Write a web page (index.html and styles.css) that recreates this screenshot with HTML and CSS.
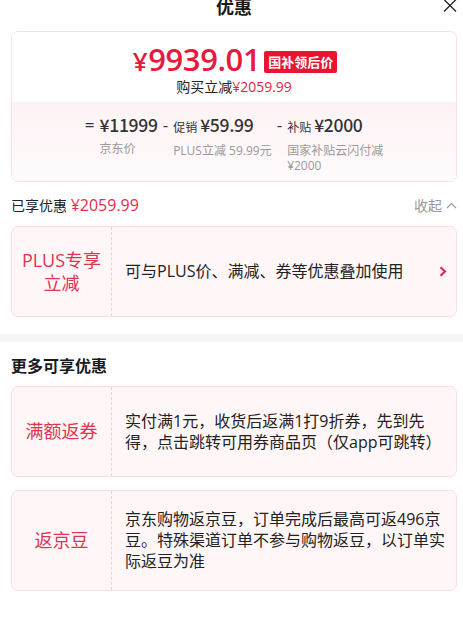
FILE: index.html
```html
<!DOCTYPE html>
<html lang="zh-CN">
<head>
<meta charset="utf-8">
<title>优惠</title>
<link rel="stylesheet" href="styles.css">
</head>
<body>
<div class="page">
  <header class="header">
    <h1 class="title">优惠</h1>
    <button class="close" aria-label="关闭">
      <svg width="14" height="13" viewBox="0 0 14 13"><path d="M1 0.5 L13 12.5 M13 0.5 L1 12.5" stroke="#222" stroke-width="1.3" fill="none"/></svg>
    </button>
  </header>

  <div class="wrap">
    <section class="summary">
      <div class="summary-top">
        <div class="price-row">
          <span class="price"><span class="yen">¥</span>9939.01</span>
          <span class="badge">国补领后价</span>
        </div>
        <div class="save">购买立减<span class="red">¥2059.99</span></div>
      </div>
      <div class="summary-bottom">
        <div class="calc">
          <div class="calc-item">
            <span class="op">=</span>
            <div class="calc-body">
              <div class="val">¥11999</div>
              <div class="lbl">京东价</div>
            </div>
          </div>
          <div class="calc-item">
            <span class="op">-</span>
            <div class="calc-body">
              <div class="val"><span class="tag">促销</span>¥59.99</div>
              <div class="lbl">PLUS立减 59.99元</div>
            </div>
          </div>
          <div class="calc-item">
            <span class="op">-</span>
            <div class="calc-body">
              <div class="val"><span class="tag">补贴</span>¥2000</div>
              <div class="lbl">国家补贴云闪付减¥2000</div>
            </div>
          </div>
        </div>
      </div>
    </section>

    <div class="enjoyed">
      <div class="enjoyed-text">已享优惠 <span class="red">¥2059.99</span></div>
      <div class="collapse">收起
        <svg width="11" height="7" viewBox="0 0 11 7"><path d="M1 6 L5.5 1.5 L10 6" stroke="#999" stroke-width="1.2" fill="none"/></svg>
      </div>
    </div>

    <div class="promo">
      <div class="promo-name">PLUS专享<br>立减</div>
      <div class="promo-desc">可与PLUS价、满减、券等优惠叠加使用</div>
      <svg class="promo-arrow" width="8" height="11" viewBox="0 0 8 11"><path d="M1.5 1.2 L6 5.5 L1.5 9.8" stroke="#e1284a" stroke-width="2.2" fill="none"/></svg>
    </div>
  </div>

  <div class="band"></div>

  <div class="wrap">
    <h2 class="section-title">更多可享优惠</h2>
    <div class="promo">
      <div class="promo-name">满额返券</div>
      <div class="promo-desc">实付满1元，收货后返满1打9折券，先到先得，点击跳转可用券商品页（仅app可跳转）</div>
    </div>
    <div class="promo">
      <div class="promo-name">返京豆</div>
      <div class="promo-desc">京东购物返京豆，订单完成后最高可返496京豆。特殊渠道订单不参与购物返豆，以订单实际返豆为准</div>
    </div>
  </div>
</div>
</body>
</html>
```

FILE: styles.css
```css
* { box-sizing: border-box; }
html, body { margin: 0; padding: 0; background: #fff; }
body {
  font-family: "Open Sans", "Noto Sans CJK SC", sans-serif;
  color: #222;
  width: 463px;
  overflow: hidden;
}
.page { width: 463px; }

.header {
  height: 31px;
  display: grid;
  grid-template-columns: 1fr auto 1fr;
  align-items: start;
  padding: 0 6px 0 11px;
}
.title {
  grid-column: 2;
  margin: -4px 0 0;
  font-size: 18px;
  line-height: 20px;
  font-weight: 700;
  color: #1a1a1a;
  font-family: "Noto Sans CJK SC", sans-serif;
}
.close {
  grid-column: 3;
  justify-self: end;
  margin: -1px 0 0;
  padding: 0;
  border: 0;
  background: none;
  width: 14px;
  height: 13px;
  display: flex;
}

.wrap { padding: 0 6px 0 11px; }

.summary {
  border: 1px solid #f7e2e5;
  border-radius: 7px;
  overflow: hidden;
  background: #fff;
}
.summary-top {
  height: 70px;
  padding-top: 12px;
  display: flex;
  flex-direction: column;
  align-items: center;
}
.price-row {
  display: flex;
  align-items: center;
  gap: 4px;
  height: 32px;
  padding-left: 2px;
}
.price {
  font-family: "Open Sans", sans-serif;
  font-weight: 600;
  font-size: 31px;
  line-height: 32px;
  color: #e8193c;
  letter-spacing: -0.4px;
}
.yen { font-size: 26px; margin-right: 1px; }
.badge {
  background: #e61530;
  color: #fff;
  font-family: "Noto Sans CJK SC", sans-serif;
  font-weight: 700;
  font-size: 13px;
  line-height: 22px;
  height: 22px;
  padding: 0 4px;
  border-radius: 2px;
  margin-top: 3px;
}
.save {
  margin-top: 2px;
  font-size: 14px;
  line-height: 18px;
  color: #222;
}
.red { color: #e3243f; }

.summary-bottom {
  border-top: 1px solid #fbeff1;
  background: linear-gradient(#fdf3f5, #fefafb);
  padding: 10px 0 8px;
  display: flex;
  justify-content: center;
}
.calc { display: flex; gap: 5px; padding-left: 4px; }
.calc-item { display: flex; gap: 5px; }
.op {
  font-size: 17px;
  line-height: 24px;
  color: #333;
}
.calc-body { max-width: 100px; }
.val {
  font-family: "Noto Sans CJK SC", sans-serif;
  font-weight: 500;
  font-size: 17.5px;
  line-height: 24px;
  color: #333;
  white-space: nowrap;
  letter-spacing: -0.3px;
}
.tag { font-size: 12px; font-weight: 400; margin-right: 3px; letter-spacing: 0; }
.lbl {
  margin-top: 4px;
  font-size: 12px;
  line-height: 15px;
  color: #999;
}

.enjoyed {
  margin: 14px 0 11px;
  display: flex;
  justify-content: space-between;
  align-items: center;
  font-size: 14px;
  line-height: 18px;
}
.enjoyed-text { color: #222; }
.enjoyed-text .red { font-size: 16px; color: #e0304a; }
.collapse {
  color: #999;
  font-size: 14px;
  display: flex;
  align-items: center;
  gap: 4px;
}

.promo {
  display: flex;
  align-items: center;
  min-height: 91px;
  border: 1px solid #f7dfe3;
  border-radius: 7px;
  background: #fff6f7;
  margin-bottom: 13px;
}
.promo-name {
  flex: 0 0 100px;
  align-self: stretch;
  display: flex;
  align-items: center;
  justify-content: center;
  text-align: center;
  border-right: 1px dashed #efcfd5;
  color: #dc3550;
  font-size: 18px;
  line-height: 23px;
}
.promo-desc {
  flex: 1;
  padding: 18px 8px 18px 13px;
  font-size: 16px;
  line-height: 21px;
  color: #222;
}
.promo-arrow { flex: none; margin-right: 9px; }

.band {
  height: 8px;
  background: #f6f6f9;
  margin-top: 17px;
}
.section-title {
  margin: 12px 0 10px;
  font-family: "Noto Sans CJK SC", sans-serif;
  font-size: 16px;
  line-height: 22px;
  font-weight: 700;
  color: #1a1a1a;
}
```
